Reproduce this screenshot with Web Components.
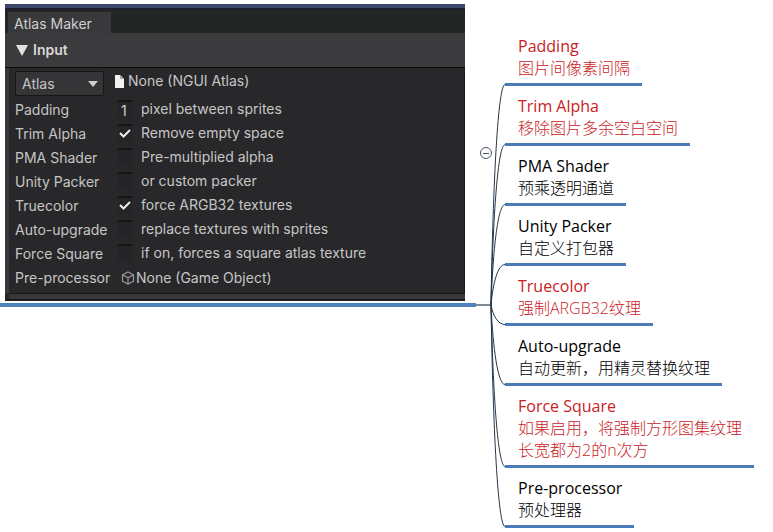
<!DOCTYPE html>
<html lang="zh-CN">
<head>
<meta charset="utf-8">
<title>Atlas Maker</title>
<style>
  body { margin: 0; background: #fff; color: #000; }
  .zh { font-weight: 300; }
</style>
</head>
<body>
<mind-map>
  <root-topic slot="root">
    <editor-window heading="Atlas Maker" section="Input">
      <atlas-row></atlas-row>
      <option-row label="Padding" type="text" value="1" hint="pixel between sprites"></option-row>
      <option-row label="Trim Alpha" type="checkbox" checked hint="Remove empty space"></option-row>
      <option-row label="PMA Shader" type="checkbox" hint="Pre-multiplied alpha"></option-row>
      <option-row label="Unity Packer" type="checkbox" hint="or custom packer"></option-row>
      <option-row label="Truecolor" type="checkbox" checked hint="force ARGB32 textures"></option-row>
      <option-row label="Auto-upgrade" type="checkbox" hint="replace textures with sprites"></option-row>
      <option-row label="Force Square" type="checkbox" hint="if on, forces a square atlas texture"></option-row>
      <option-row label="Pre-processor" type="object" hint="None (Game Object)"></option-row>
    </editor-window>
  </root-topic>
  <map-branch important><span>Padding</span><span class="zh">图片间像素间隔</span></map-branch>
  <map-branch important><span>Trim Alpha</span><span class="zh">移除图片多余空白空间</span></map-branch>
  <map-branch><span>PMA Shader</span><span class="zh">预乘透明通道</span></map-branch>
  <map-branch><span>Unity Packer</span><span class="zh">自定义打包器</span></map-branch>
  <map-branch important><span>Truecolor</span><span class="zh">强制ARGB32纹理</span></map-branch>
  <map-branch><span>Auto-upgrade</span><span class="zh">自动更新，用精灵替换纹理</span></map-branch>
  <map-branch important><span>Force Square</span><span class="zh">如果启用，将强制方形图集纹理</span><span class="zh">长宽都为2的n次方</span></map-branch>
  <map-branch><span>Pre-processor</span><span class="zh">预处理器</span></map-branch>
</mind-map>

<script>
class BaseElement extends HTMLElement {
  render(html) {
    this.attachShadow({ mode: 'open' }).innerHTML = html;
  }
  text(name) { return this.getAttribute(name) || ''; }
}

customElements.define('root-topic', class extends BaseElement {
  connectedCallback() {
    this.render(`
      <style>
        :host { display: block; padding: 4px 11px 2px 5px; border-bottom: 4px solid #4f81bd; }
      </style>
      <slot></slot>`);
  }
});

customElements.define('map-branch', class extends BaseElement {
  connectedCallback() {
    this.render(`
      <style>
        :host {
          display: flex; flex-direction: column; width: fit-content;
          padding: 9px 12px 4px 13px; border-bottom: 3px solid #4a7ab8;
          font: 16px/22px "Open Sans", "Noto Sans CJK SC", sans-serif;
          color: #000; white-space: nowrap;
        }
        :host([important]) { color: #c9211e; }
      </style>
      <slot></slot>`);
  }
});

customElements.define('mind-map', class extends BaseElement {
  connectedCallback() {
    this.render(`
      <style>
        :host { display: grid; grid-template-columns: minmax(0, 1fr) 29px 268px; }
        .links { position: relative; }
        svg { display: block; width: 29px; height: 100%; overflow: visible; }
        path { fill: none; stroke: #26364a; stroke-width: 1; }
        path.stem { stroke: #7f8994; stroke-width: 2; }
        nav { padding-top: 26px; padding-bottom: 4px; }
        button {
          position: absolute; left: 4px; top: 147px; width: 12px; height: 12px;
          display: grid; place-items: center; padding: 0;
          border: 1px solid #4b5560; border-radius: 50%; background: #fff;
        }
        button::before { content: ""; width: 6px; height: 1px; background: #4b5560; }
      </style>
      <div><slot name="root"></slot></div>
      <div class="links"><svg aria-hidden="true"></svg><button aria-label="Collapse branches"></button></div>
      <nav><slot></slot></nav>`);
    this.draw();
    new ResizeObserver(() => this.draw()).observe(this);
  }
  // Links leave the end of the root line and meet the underline of each branch.
  draw() {
    const svg = this.shadowRoot.querySelector('svg');
    const top = this.getBoundingClientRect().top;
    const start = this.querySelector('root-topic').getBoundingClientRect().bottom - top - 2;
    let d = '';
    for (const branch of this.querySelectorAll('map-branch')) {
      const y = branch.getBoundingClientRect().bottom - top - 1.5;
      const lean = start + (y - start) * 0.56;
      d += `M15 ${start}C17 ${lean} 22 ${y} 29 ${y}`;
    }
    svg.innerHTML = `<path class="stem" d="M0 ${start}H15"/><path d="${d}"/>`;
  }
});

customElements.define('editor-window', class extends BaseElement {
  connectedCallback() {
    this.render(`
      <style>
        :host {
          display: block; background: #28282a; color: #c6c6c6;
          border-top: 4px solid #3d4768; border-bottom: 2px solid #1d1c1e;
          font: 14px/24px Inter, "Liberation Sans", sans-serif;
        }
        .tabs { display: flex; padding: 3px 0 0 3px; background: #242525; border-top: 1px solid #1b1f35; height: 21px; }
        .tab { padding: 0 19px 0 6px; background: #39393b; color: #cfcfcf; line-height: 23px; height: 21px; }
        h2 {
          display: flex; align-items: center; gap: 5px; margin: 0; padding-left: 11px;
          height: 34px; background: #3b3a3c; border-bottom: 1px solid #0c0c0c;
          font-size: 14px; font-weight: 600; color: #d8d8d8; line-height: 34px;
        }
        h2 svg { width: 12px; height: 11px; }
        .body { border-left: 4px solid #37393c; border-right: 1px solid #1c1b1d; padding: 1px 0 4px 6px; }
        footer { height: 5px; margin-left: 4px; border-top: 1px solid #1a191a; background: #393637; }
      </style>
      <div class="tabs"><div class="tab">${this.text('heading')}</div></div>
      <h2><svg viewBox="0 0 12 11" aria-hidden="true"><path d="M0 0H12L6 11Z" fill="#e2e2e4"/></svg>${this.text('section')}</h2>
      <div class="body"><slot></slot></div>
      <footer></footer>`);
  }
});

customElements.define('atlas-row', class extends BaseElement {
  connectedCallback() {
    this.render(`
      <style>
        :host { display: flex; align-items: center; gap: 10px; height: 28px; }
        .pick { position: relative; width: 89px; height: 25px; }
        select {
          appearance: none; box-sizing: border-box; width: 100%; height: 100%;
          padding: 0 6px; border: 1px solid #161617; border-radius: 2px;
          background: #353537; color: #c6c6c6; font: inherit;
        }
        .pick svg { position: absolute; right: 6px; top: 10px; width: 10px; height: 6px; pointer-events: none; }
        button {
          display: flex; align-items: center; gap: 4px; padding: 0 0 4px; border: 0;
          background: none; color: inherit; font: inherit;
        }
        button svg { width: 10px; height: 13px; }
      </style>
      <div class="pick">
        <select aria-label="Atlas type"><option>Atlas</option></select>
        <svg viewBox="0 0 10 6" aria-hidden="true"><path d="M0 0H10L5 6Z" fill="#cfcfcf"/></svg>
      </div>
      <button><svg viewBox="0 0 10 13" aria-hidden="true"><path d="M1 0H6L10 4V13H1Z" fill="#f2f2f2"/><path d="M6 0V4H10Z" fill="#a9a9aa"/></svg>None (NGUI Atlas)</button>`);
  }
});

customElements.define('option-row', class extends BaseElement {
  connectedCallback() {
    const type = this.text('type');
    const hint = this.text('hint');
    let field;
    if (type === 'object') {
      field = `<button id="field"><svg viewBox="0 0 14 14" aria-hidden="true"><path d="M7 1L12.5 3.8V10.2L7 13L1.5 10.2V3.8ZM1.5 3.8L7 6.8L12.5 3.8M7 6.8V13" fill="none" stroke="#9a9a9a" stroke-width="1.2"/></svg>${hint}</button>`;
    } else if (type === 'text') {
      field = `<input id="field" type="text" value="${this.text('value')}"><span>${hint}</span>`;
    } else {
      field = `<input id="field" type="checkbox"${this.hasAttribute('checked') ? ' checked' : ''}><span>${hint}</span>`;
    }
    this.render(`
      <style>
        :host { display: grid; grid-template-columns: 103px minmax(0, 1fr); height: 24px; white-space: nowrap; }
        label { padding-top: 1px; }
        .field { display: flex; align-items: center; gap: 8px; height: 24px; }
        input {
          appearance: none; box-sizing: border-box; flex: none; width: 15px; height: 18px; margin: 0; padding: 0;
          border: 0; border-top: 2px solid #151516; border-radius: 2px;
          background: #252527; color: #d2d2d2; font: inherit; line-height: 16px;
        }
        input[type=text] { padding-left: 3px; }
        input:checked {
          background: #252527 url("data:image/svg+xml,%3Csvg xmlns='http://www.w3.org/2000/svg' viewBox='0 0 15 16'%3E%3Cpath d='M2 7L5.500 10.500L12 4' fill='none' stroke='%23ececec' stroke-width='2'/%3E%3C/svg%3E") center / 15px 16px no-repeat;
        }
        button {
          display: flex; align-items: center; gap: 1px; padding: 1px 0 0 3px; border: 0;
          background: none; color: inherit; font: inherit;
        }
        button svg { width: 14px; height: 14px; }
      </style>
      <label for="field">${this.text('label')}</label>
      <div class="field">${field}</div>`);
  }
});
</script>
</body>
</html>
